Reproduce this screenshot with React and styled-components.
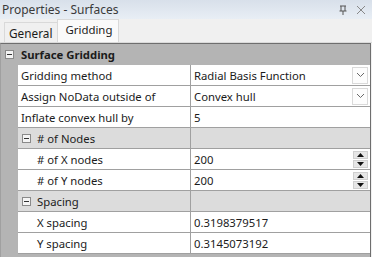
import React from "react";
import styled, { createGlobalStyle } from "styled-components";

const Global = createGlobalStyle`
  html, body { margin: 0; padding: 0; background: #f0f0f0; }
  body { font-family: "Noto Sans", "Open Sans", sans-serif; font-size: 11.3px; color: #1b1b1b; }
`;

const Panel = styled.div`
  width: 372px;
  height: 257px;
  display: flex;
  flex-direction: column;
  background: #f0f0f0;
  overflow: hidden;
`;

const TitleBar = styled.div`
  height: 19px;
  display: flex;
  align-items: center;
  padding: 0 6px 0 2px;
  background: linear-gradient(#d8e0ea, #e8eef5);
  color: #3a3a3a;
  font-size: 12px;
`;

const Title = styled.span`
  flex: 1;
`;

const TitleIcon = styled.svg`
  width: 10px;
  height: 10px;
  margin-left: 8px;
`;

const TabStrip = styled.div`
  height: 23px;
  display: flex;
  align-items: flex-end;
  padding-left: 4px;
  background: #f0f0f0;
  border-bottom: 1px solid #dadada;
`;

const Tab = styled.div`
  height: ${(p) => (p.$active ? "23px" : "20px")};
  padding: ${(p) => (p.$active ? "0 6px 3px 7px" : "1px 5px 0 4px")};
  display: flex;
  align-items: center;
  box-sizing: border-box;
  background: ${(p) => (p.$active ? "#fafafa" : "#f0f0f0")};
  border: 1px solid #d9d9d9;
  border-bottom: none;
  margin-left: ${(p) => (p.$active ? "-1px" : "0")};
  color: #1b1b1b;
  font-size: ${(p) => (p.$active ? "11.4px" : "11.8px")};
`;

const Grid = styled.div`
  flex: 1;
  margin-right: 1px;
  border-top: 1px solid #6e6e6e;
  border-right: 1px solid #6e6e6e;
  border-left: 1px solid #a0a0a0;
  background: #b4b4b4;
  display: flex;
  flex-direction: column;
`;

const CategoryRow = styled.div`
  height: 21px;
  display: flex;
  align-items: center;
  background: #b4b4b4;
  font-weight: bold;
  font-size: 11.3px;
  padding-left: 4px;
  gap: 7px;
`;

const Row = styled.div`
  height: 21px;
  display: flex;
  margin-left: 17px;
  border-bottom: 1px solid #a0a0a0;
  box-sizing: border-box;
  background: ${(p) => (p.$sub ? "#dcdcdc" : "#ffffff")};
`;

const LabelCell = styled.div`
  width: 173px;
  flex: none;
  display: flex;
  align-items: center;
  gap: 6px;
  padding-left: ${(p) => (p.$indent ? "19px" : "3px")};
  ${(p) => p.$sub && "padding-left: 4px;"}
  box-sizing: border-box;
  border-right: 1px solid #a0a0a0;
  white-space: nowrap;
`;

const ValueCell = styled.div`
  flex: 1;
  display: flex;
  align-items: center;
  padding-left: 3px;
  padding-right: 2px;
  white-space: nowrap;
`;

const ValueText = styled.span`
  flex: 1;
`;

const Expander = styled.span`
  width: 9px;
  height: 9px;
  box-sizing: border-box;
  border: 1px solid #8a8a8a;
  background: #f4f4f4;
  position: relative;
  flex: none;
  &::after {
    content: "";
    position: absolute;
    left: 1px;
    right: 1px;
    top: 3px;
    height: 1px;
    background: #333;
  }
`;

const DropButton = styled.div`
  width: 16px;
  height: 17px;
  box-sizing: border-box;
  border: 1px solid #dadada;
  background: #fdfdfd;
  display: flex;
  align-items: center;
  justify-content: center;
`;

const Spinner = styled.div`
  width: 15px;
  height: 17px;
  display: flex;
  flex-direction: column;
  gap: 1px;
`;

const SpinBtn = styled.div`
  flex: 1;
  background: #e6e6e6;
  border: 1px solid #cfcfcf;
  box-sizing: border-box;
  display: flex;
  align-items: center;
  justify-content: center;
`;

const Chevron = () => (
  <svg width="9" height="6" viewBox="0 0 9 6">
    <path d="M1 1 L4.5 4.5 L8 1" fill="none" stroke="#6a6a6a" strokeWidth="1" />
  </svg>
);

const Tri = ({ up }) => (
  <svg width="7" height="4" viewBox="0 0 7 4">
    <path d={up ? "M0 4 L3.5 0 L7 4 Z" : "M0 0 L3.5 4 L7 0 Z"} fill="#111" />
  </svg>
);

const Prop = ({ label, value, indent, control }) => (
  <Row>
    <LabelCell $indent={indent}>{label}</LabelCell>
    <ValueCell>
      <ValueText>{value}</ValueText>
      {control === "drop" && (
        <DropButton>
          <Chevron />
        </DropButton>
      )}
      {control === "spin" && (
        <Spinner>
          <SpinBtn>
            <Tri up />
          </SpinBtn>
          <SpinBtn>
            <Tri />
          </SpinBtn>
        </Spinner>
      )}
    </ValueCell>
  </Row>
);

const SubCategory = ({ label }) => (
  <Row $sub>
    <LabelCell $sub>
      <Expander />
      {label}
    </LabelCell>
    <ValueCell />
  </Row>
);

export default function App() {
  return (
    <>
      <Global />
      <Panel>
        <TitleBar>
          <Title>Properties - Surfaces</Title>
          <TitleIcon viewBox="0 0 10 10">
            <path d="M2 1 H8 M3 1 V6 M7 1 V6 M1.5 6 H8.5 M5 6 V10" stroke="#555" strokeWidth="1" fill="none" />
          </TitleIcon>
          <TitleIcon viewBox="0 0 10 10">
            <path d="M1 1 L9 9 M9 1 L1 9" stroke="#888" strokeWidth="1" fill="none" />
          </TitleIcon>
        </TitleBar>
        <TabStrip>
          <Tab>General</Tab>
          <Tab $active>Gridding</Tab>
        </TabStrip>
        <Grid>
          <CategoryRow>
            <Expander />
            Surface Gridding
          </CategoryRow>
          <Prop label="Gridding method" value="Radial Basis Function" control="drop" />
          <Prop label="Assign NoData outside of" value="Convex hull" control="drop" />
          <Prop label="Inflate convex hull by" value="5" />
          <SubCategory label="# of Nodes" />
          <Prop label="# of X nodes" value="200" indent control="spin" />
          <Prop label="# of Y nodes" value="200" indent control="spin" />
          <SubCategory label="Spacing" />
          <Prop label="X spacing" value="0.3198379517" indent />
          <Prop label="Y spacing" value="0.3145073192" indent />
        </Grid>
      </Panel>
    </>
  );
}
